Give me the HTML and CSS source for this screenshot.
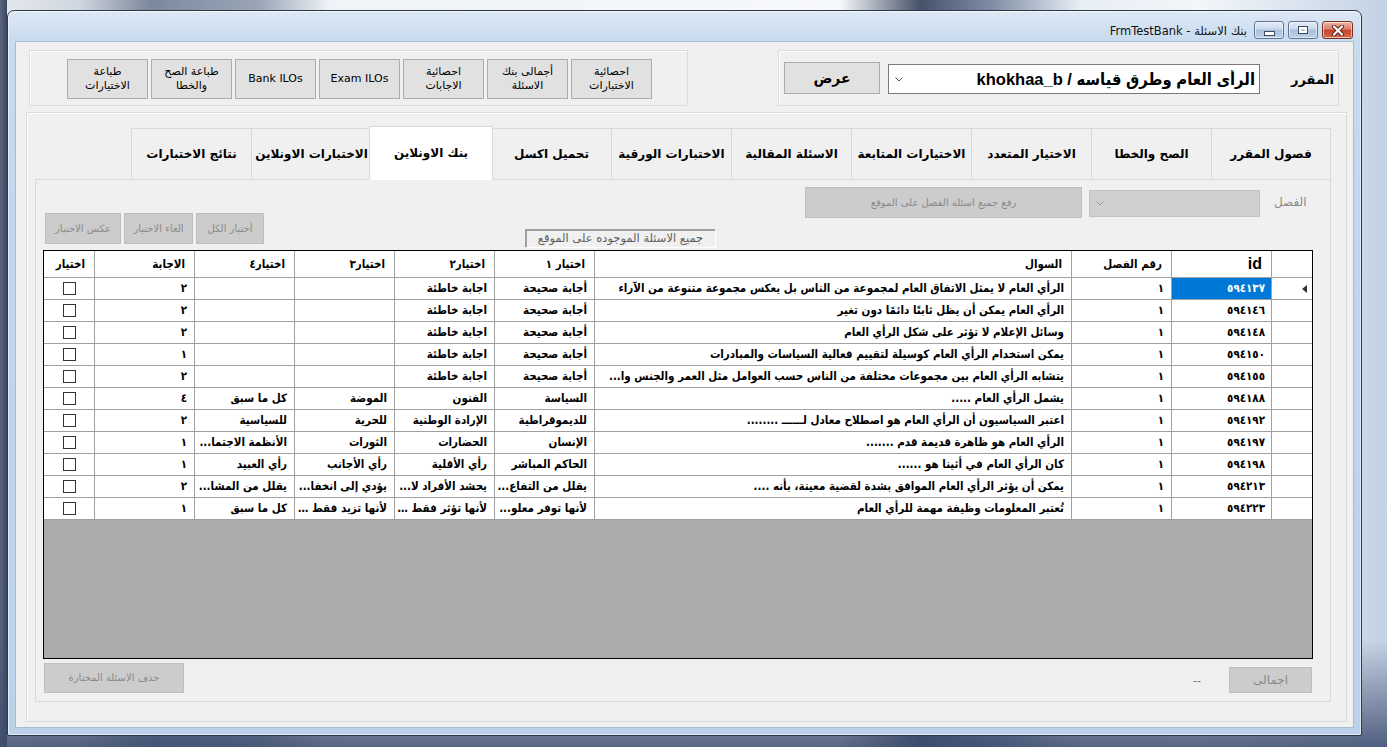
FILE: index.html
```html
<!DOCTYPE html>
<html lang="ar">
<head>
<meta charset="utf-8">
<title>FrmTestBank</title>
<link rel="stylesheet" href="styles.css">
</head>
<body>
<div class="desktop">
  <div class="window">
    <div class="titlebar">
      <div class="title" dir="rtl">بنك الاسئلة - FrmTestBank</div>
      <div class="caption-buttons">
        <span class="cb cb-min"><i></i></span>
        <span class="cb cb-max"><i></i></span>
        <span class="cb cb-close">
          <svg width="14" height="11" viewBox="0 0 14 11"><path d="M3 1.5 L11 9.5 M11 1.5 L3 9.5" stroke="#5a1e14" stroke-width="4" stroke-linecap="round"/><path d="M3 1.5 L11 9.5 M11 1.5 L3 9.5" stroke="#ffffff" stroke-width="2.2" stroke-linecap="round"/></svg>
        </span>
      </div>
    </div>
    <div class="client">
      <div class="top-row">
        <div class="groupbox gb-actions">
          <button class="btn act">طباعة<br>الاختيارات</button>
          <button class="btn act">طباعة الصح<br>والخطا</button>
          <button class="btn act">Bank ILOs</button>
          <button class="btn act">Exam ILOs</button>
          <button class="btn act">احصائية<br>الاجابات</button>
          <button class="btn act">أجمالى بنك<br>الاسئلة</button>
          <button class="btn act">احصائية<br>الاختبارات</button>
        </div>
        <div class="groupbox gb-course">
          <button class="btn btn-show">عرض</button>
          <div class="combo combo-course">
            <svg class="chev" width="8" height="5" viewBox="0 0 8 5"><polyline points="0.5,0.5 4,4 7.5,0.5" fill="none" stroke="#555" stroke-width="1"/></svg>
            <span class="combo-text" dir="rtl">الرأى العام وطرق قياسه / khokhaa_b</span>
          </div>
          <span class="lbl-course">المقرر</span>
        </div>
      </div>

      <div class="tabhost">
        <div class="tabstrip">
          <div class="tab first">فصول المقرر</div>
          <div class="tab">الصح والخطا</div>
          <div class="tab">الاختيار المتعدد</div>
          <div class="tab">الاختيارات المتابعة</div>
          <div class="tab">الاسئلة المقالية</div>
          <div class="tab">الاختبارات الورقية</div>
          <div class="tab">تحميل اكسل</div>
          <div class="tab selected">بنك الاونلاين</div>
          <div class="tab">الاختبارات الاونلاين</div>
          <div class="tab">نتائج الاختبارات</div>
        </div>
        <div class="tabpage">
          <div class="tools">
            <div class="sel-buttons">
              <button class="btn dis w76">عكس الاختيار</button>
              <button class="btn dis w69">الغاء الاختيار</button>
              <button class="btn dis w68">أختيار الكل</button>
            </div>
            <div class="boxlabel" dir="rtl">جميع الاسئلة الموجوده على الموقع</div>
            <div class="chapter-tools">
              <button class="btn dis upload">رفع جميع اسئلة الفصل على الموقع</button>
              <div class="combo combo-dis">
                <svg class="chev" width="8" height="5" viewBox="0 0 8 5"><polyline points="0.5,0.5 4,4 7.5,0.5" fill="none" stroke="#9a9a9a" stroke-width="1"/></svg>
              </div>
              <span class="lbl-chapter">الفصل</span>
            </div>
          </div>

          <div class="grid">
            <div class="row head">
              <div class="c rh"></div><div class="c h-id">id</div><div class="c">رقم الفصل</div><div class="c">السوال</div><div class="c">اختيار ١</div><div class="c">اختيار٢</div><div class="c">اختيار٣</div><div class="c">اختيار٤</div><div class="c">الاجابة</div><div class="c">اختيار</div>
            </div>
            <div class="row">
              <div class="c rh cur"></div><div class="c id sel">٥٩٤١٣٧</div><div class="c">١</div><div class="c">الرأي العام لا يمثل الاتفاق العام لمجموعة من الناس بل يعكس مجموعة متنوعة من الآراء</div><div class="c">أجابة صحيحة</div><div class="c">اجابة خاطئة</div><div class="c"></div><div class="c"></div><div class="c">٢</div><div class="c chk"><span class="box"></span></div>
            </div>
            <div class="row">
              <div class="c rh"></div><div class="c id">٥٩٤١٤٦</div><div class="c">١</div><div class="c">الرأي العام يمكن أن يظل ثابتًا دائمًا دون تغير</div><div class="c">أجابة صحيحة</div><div class="c">اجابة خاطئة</div><div class="c"></div><div class="c"></div><div class="c">٢</div><div class="c chk"><span class="box"></span></div>
            </div>
            <div class="row">
              <div class="c rh"></div><div class="c id">٥٩٤١٤٨</div><div class="c">١</div><div class="c">وسائل الإعلام لا تؤثر على شكل الرأي العام</div><div class="c">أجابة صحيحة</div><div class="c">اجابة خاطئة</div><div class="c"></div><div class="c"></div><div class="c">٢</div><div class="c chk"><span class="box"></span></div>
            </div>
            <div class="row">
              <div class="c rh"></div><div class="c id">٥٩٤١٥٠</div><div class="c">١</div><div class="c">يمكن استخدام الرأي العام كوسيلة لتقييم فعالية السياسات والمبادرات</div><div class="c">أجابة صحيحة</div><div class="c">اجابة خاطئة</div><div class="c"></div><div class="c"></div><div class="c">١</div><div class="c chk"><span class="box"></span></div>
            </div>
            <div class="row">
              <div class="c rh"></div><div class="c id">٥٩٤١٥٥</div><div class="c">١</div><div class="c">يتشابه الرأي العام بين مجموعات مختلفة من الناس حسب العوامل مثل العمر والجنس وا...</div><div class="c">أجابة صحيحة</div><div class="c">اجابة خاطئة</div><div class="c"></div><div class="c"></div><div class="c">٢</div><div class="c chk"><span class="box"></span></div>
            </div>
            <div class="row">
              <div class="c rh"></div><div class="c id">٥٩٤١٨٨</div><div class="c">١</div><div class="c">يشمل الرأي العام .....</div><div class="c">السياسة</div><div class="c">الفنون</div><div class="c">الموضة</div><div class="c">كل ما سبق</div><div class="c">٤</div><div class="c chk"><span class="box"></span></div>
            </div>
            <div class="row">
              <div class="c rh"></div><div class="c id">٥٩٤١٩٢</div><div class="c">١</div><div class="c">اعتبر السياسيون أن الرأي العام هو اصطلاح معادل لــــــ ........</div><div class="c">للديموقراطية</div><div class="c">الإرادة الوطنية</div><div class="c">للحرية</div><div class="c">للسياسية</div><div class="c">٢</div><div class="c chk"><span class="box"></span></div>
            </div>
            <div class="row">
              <div class="c rh"></div><div class="c id">٥٩٤١٩٧</div><div class="c">١</div><div class="c">الرأي العام هو ظاهرة قديمة قدم .......</div><div class="c">الإنسان</div><div class="c">الحضارات</div><div class="c">الثورات</div><div class="c">الأنظمة الاجتما...</div><div class="c">١</div><div class="c chk"><span class="box"></span></div>
            </div>
            <div class="row">
              <div class="c rh"></div><div class="c id">٥٩٤١٩٨</div><div class="c">١</div><div class="c">كان الرأي العام في أثينا هو ......</div><div class="c">الحاكم المباشر</div><div class="c">رأي الأقلية</div><div class="c">رأي الأجانب</div><div class="c">رأي العبيد</div><div class="c">١</div><div class="c chk"><span class="box"></span></div>
            </div>
            <div class="row">
              <div class="c rh"></div><div class="c id">٥٩٤٢١٣</div><div class="c">١</div><div class="c">يمكن أن يؤثر الرأي العام الموافق بشدة لقضية معينة، بأنه ....</div><div class="c">يقلل من التفاع...</div><div class="c">يحشد الأفراد لا...</div><div class="c">يؤدي إلى انخفا...</div><div class="c">يقلل من المشا...</div><div class="c">٢</div><div class="c chk"><span class="box"></span></div>
            </div>
            <div class="row">
              <div class="c rh"></div><div class="c id">٥٩٤٢٢٣</div><div class="c">١</div><div class="c">تُعتبر المعلومات وظيفة مهمة للرأي العام</div><div class="c">لأنها توفر معلو...</div><div class="c">لأنها تؤثر فقط ...</div><div class="c">لأنها تزيد فقط ...</div><div class="c">كل ما سبق</div><div class="c">١</div><div class="c chk"><span class="box"></span></div>
            </div>
          </div>

          <div class="bottom">
            <button class="btn dis delete">حذف الاسئلة المختارة</button>
            <div class="totals">
              <span class="dash">--</span>
              <button class="btn dis total">اجمالى</button>
            </div>
          </div>
        </div>
      </div>
    </div>
  </div>
</div>
</body>
</html>
```

FILE: styles.css
```css
html, body {
  margin: 0;
  padding: 0;
}

body {
  width: 1387px;
  height: 747px;
  overflow: hidden;
  font-family: "Liberation Sans", "DejaVu Sans", sans-serif;
  background-color: #cfdae7;
  background-image:
    linear-gradient(180deg, rgba(0,0,0,0) 0, rgba(0,0,0,0) 640px, rgba(60,75,110,0.85) 747px),
    linear-gradient(90deg, #5a6680 0, #3a4660 7px, rgba(0,0,0,0) 7px),
    linear-gradient(90deg, #e4e8ee 0, #d0d6df 80px, #7c889c 150px, #9aa6b8 260px, #f0f3f7 330px, #f6f8fb 840px, #46526a 920px, #7d8ba3 990px, #e8eef5 1080px, #f3f6fa 1200px, #c3d2e4 1387px);
}

.desktop {
  height: 747px;
  box-sizing: border-box;
  padding: 10px 25px 11px 7px;
}

/* ---------- window frame ---------- */
.window {
  height: 726px;
  box-sizing: border-box;
  border: 1px solid #2b3948;
  border-radius: 7px 7px 2px 2px;
  background: linear-gradient(180deg, #dde8f5 0, #c9dbef 30px, #c2d6ed 200px, #bcd2eb 100%);
  box-shadow: inset 0 0 0 1px rgba(255,255,255,0.55);
  display: flex;
  flex-direction: column;
}

.titlebar {
  height: 30px;
  flex: none;
  display: flex;
  justify-content: flex-end;
  align-items: flex-start;
  padding-right: 8px;
  gap: 7px;
}

.title {
  margin-top: 12px;
  font-family: "DejaVu Sans", "Liberation Sans", sans-serif;
  font-size: 11.5px;
  line-height: 16px;
  color: #111;
}

.caption-buttons {
  margin-top: 10px;
  display: flex;
  gap: 4px;
}

.cb {
  width: 30px;
  height: 18px;
  box-sizing: border-box;
  border: 1px solid #5f7390;
  border-radius: 3px;
  display: flex;
  align-items: center;
  justify-content: center;
  background: linear-gradient(180deg, #e3ecf7 0, #c9d9ec 45%, #a9c0dc 50%, #bcd0e8 100%);
  box-shadow: inset 0 0 0 1px rgba(255,255,255,0.55);
}

.cb-min i {
  display: block;
  width: 9px;
  height: 3px;
  margin-top: 6px;
  background: #fff;
  border: 1px solid #3d4a5c;
}

.cb-max i {
  display: block;
  width: 8px;
  height: 6px;
  box-sizing: border-box;
  background: transparent;
  border: 2px solid #fff;
  outline: 1px solid #3d4a5c;
}

.cb-close {
  width: 31px;
  border-color: #7a2e22;
  background: linear-gradient(180deg, #eab3a5 0, #d9826d 45%, #c5452d 50%, #d36a4f 100%);
}

/* ---------- client ---------- */
.client {
  flex: 1;
  margin: 0 7px 7px 7px;
  box-sizing: border-box;
  border: 1px solid #a7bbd3;
  background: #f0f0f0;
  display: flex;
  flex-direction: column;
}

.top-row {
  height: 56px;
  flex: none;
  margin-top: 8px;
  padding: 0 14px 0 13px;
  display: flex;
  justify-content: space-between;
}

.groupbox {
  box-sizing: border-box;
  height: 56px;
  border: 1px solid #dcdcdc;
  box-shadow: inset 1px 1px 0 #fff;
  display: flex;
}

.gb-actions {
  width: 659px;
  padding: 8px 0 0 37px;
  gap: 3px;
  align-items: flex-start;
}

.gb-course {
  width: 561px;
  padding: 0 4px 0 5px;
  align-items: center;
}

.btn {
  box-sizing: border-box;
  margin: 0;
  padding: 0;
  border: 1px solid #adadad;
  background: #e1e1e1;
  color: #000;
  font-family: "DejaVu Sans", "Liberation Sans", sans-serif;
  font-size: 11px;
  line-height: 14px;
  text-align: center;
  cursor: default;
}

.act {
  width: 81px;
  height: 40px;
}

.btn-show {
  width: 96px;
  height: 32px;
  font-size: 14px;
  font-weight: bold;
}

.combo {
  box-sizing: border-box;
  display: flex;
  align-items: center;
  position: relative;
}

.combo-course {
  width: 372px;
  height: 30px;
  margin-left: 8px;
  margin-top: 2px;
  background: #fff;
  border: 1px solid #7a7a7a;
  padding: 0 4px 0 6px;
}

.combo-course .chev {
  flex: none;
}

.combo-text {
  flex: 1;
  text-align: right;
  font-family: "Liberation Sans", "DejaVu Sans Condensed", "DejaVu Sans", sans-serif;
  font-stretch: condensed;
  font-weight: bold;
  font-size: 16.5px;
  white-space: nowrap;
  overflow: hidden;
}

.lbl-course {
  margin-left: auto;
  font-family: "DejaVu Sans", sans-serif;
  font-weight: bold;
  font-size: 13px;
  color: #000;
  padding-top: 2px;
}

/* ---------- tab control ---------- */
.tabhost {
  flex: 1;
  margin: 6px 6px 5px 10px;
  box-sizing: border-box;
  border: 1px solid #dadada;
  box-shadow: inset 1px 1px 0 #fff;
  padding: 13px 15px 19px 8px;
  display: flex;
  flex-direction: column;
}

.tabstrip {
  height: 53px;
  flex: none;
  display: flex;
  flex-direction: row-reverse;
  align-items: flex-end;
}

.tab {
  width: 120px;
  height: 51px;
  box-sizing: border-box;
  border-top: 1px solid #d9d9d9;
  border-left: 1px solid #d9d9d9;
  background: #f0f0f0;
  display: flex;
  align-items: center;
  justify-content: center;
  font-family: "DejaVu Sans", sans-serif;
  font-weight: bold;
  font-size: 12px;
  color: #000;
  white-space: nowrap;
}

.tab.first {
  border-right: 1px solid #d9d9d9;
}

.tab.selected {
  width: 124px;
  height: 54px;
  margin: 0 -2px -1px -2px;
  border: 1px solid #d9d9d9;
  border-bottom: none;
  background: #fff;
  position: relative;
  z-index: 2;
  padding-bottom: 2px;
}

.tabpage {
  flex: 1;
  box-sizing: border-box;
  border: 1px solid #d9d9d9;
  background: #f0f0f0;
  display: flex;
  flex-direction: column;
}

.tools {
  height: 70px;
  flex: none;
  display: flex;
  align-items: flex-start;
}

.sel-buttons {
  margin: 33px 0 0 9px;
  display: flex;
  gap: 3px;
}

.dis {
  background: #cccccc;
  border-color: #bfbfbf;
  color: #8a8a8a;
  font-size: 10px;
}

.w76 { width: 76px; height: 31px; }
.w69 { width: 69px; height: 31px; }
.w68 { width: 68px; height: 31px; }

.boxlabel {
  margin: 49px 0 0 261px;
  width: 191px;
  height: 19px;
  box-sizing: border-box;
  border-top: 1px solid #a0a0a0;
  border-left: 1px solid #a0a0a0;
  border-right: 1px solid #fff;
  border-bottom: 1px solid #fff;
  box-shadow: 1px 1px 0 #a0a0a0 inset;
  font-family: "DejaVu Sans", sans-serif;
  font-size: 11.5px;
  line-height: 17px;
  color: #5f5f5f;
  text-align: center;
  white-space: nowrap;
  overflow: hidden;
}

.chapter-tools {
  margin-left: auto;
  margin-right: 24px;
  display: flex;
  align-items: flex-start;
}

.upload {
  width: 277px;
  height: 31px;
  margin-top: 7px;
}

.combo-dis {
  width: 171px;
  height: 27px;
  margin: 10px 0 0 7px;
  background: #cfcfcf;
  border: 1px solid #c2c2c2;
  padding-left: 6px;
}

.lbl-chapter {
  width: 32px;
  margin: 15px 0 0 14px;
  text-align: right;
  font-family: "DejaVu Sans", sans-serif;
  font-size: 12px;
  color: #8a8a8a;
}

/* ---------- data grid ---------- */
.grid {
  margin-left: 7px;
  width: 1270px;
  height: 409px;
  flex: none;
  box-sizing: border-box;
  border: 1px solid #000;
  background: #ababab;
  direction: rtl;
}

.row {
  display: grid;
  grid-template-columns: 41px 100px 100px 477px 100px 100px 100px 100px 100px 50px;
  height: 22px;
  background: #fff;
}

.c {
  box-sizing: border-box;
  border-left: 1px solid #a0a0a0;
  border-bottom: 1px solid #a0a0a0;
  padding: 0 7px 0 2px;
  font-family: "DejaVu Sans Condensed", "DejaVu Sans", "Liberation Sans", sans-serif;
  font-stretch: condensed;
  font-weight: bold;
  font-size: 11.5px;
  line-height: 21px;
  color: #000;
  text-align: right;
  white-space: nowrap;
  overflow: hidden;
  text-overflow: ellipsis;
}

.c:last-child {
  border-left: none;
}

.head {
  height: 27px;
}

.head .c {
  line-height: 26px;
  padding-right: 9px;
}

.head .h-id {
  font-family: "Liberation Sans", sans-serif;
  font-stretch: normal;
  font-size: 16px;
}

.c.id {
  letter-spacing: 1px;
  padding-right: 6px;
}

.c.sel {
  background: #0078d7;
  color: #fff;
}

.c.rh {
  display: flex;
  align-items: center;
  justify-content: flex-start;
  padding-right: 5px;
}

.c.rh.cur::before {
  content: "";
  display: block;
  width: 0;
  height: 0;
  border-top: 4px solid transparent;
  border-bottom: 4px solid transparent;
  border-right: 5px solid #333;
}

.c.chk {
  display: flex;
  align-items: center;
  justify-content: center;
  padding: 0;
}

.box {
  display: block;
  width: 13px;
  height: 13px;
  box-sizing: border-box;
  border: 1px solid #333;
  background: #fff;
}

/* ---------- bottom row ---------- */
.bottom {
  height: 30px;
  flex: none;
  margin-top: 4px;
  display: flex;
  justify-content: space-between;
  align-items: flex-end;
  padding: 0 18px 0 8px;
}

.delete {
  width: 140px;
  height: 30px;
}

.totals {
  display: flex;
  align-items: flex-end;
}

.dash {
  font-size: 12px;
  color: #777;
  margin-right: 28px;
  line-height: 16px;
  padding-bottom: 4px;
}

.total {
  width: 83px;
  height: 26px;
  font-size: 12px;
}
```
